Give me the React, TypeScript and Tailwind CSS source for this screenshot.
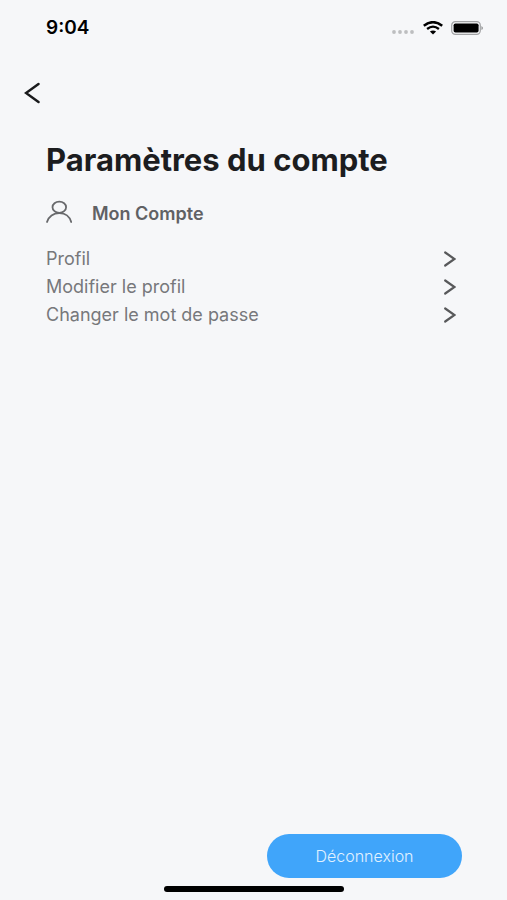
const accountLinks = ["Profil", "Modifier le profil", "Changer le mot de passe"];

function StatusBar() {
  return (
    <div className="flex h-14 items-center justify-between pr-6 pl-[46px]">
      <span className="text-[19px] font-semibold text-black">9:04</span>
      <div className="flex items-center gap-2">
        <svg className="mt-2 h-1 w-6" viewBox="0 0 24 4" fill="#bdbec0" aria-hidden="true">
          <circle cx="3" cy="2" r="1.9" />
          <circle cx="9" cy="2" r="1.9" />
          <circle cx="15" cy="2" r="1.9" />
          <circle cx="21" cy="2" r="1.9" />
        </svg>
        <svg className="h-[14px] w-5" viewBox="0 0 20 14" fill="none" aria-hidden="true">
          <path d="M0.8 4.7Q10 -2.4 19.2 4.7" stroke="#000" strokeWidth="2.5" />
          <path d="M4.1 8Q10 3.2 15.9 8" stroke="#000" strokeWidth="2.3" />
          <path d="M6.9 10.6Q10 8.3 13.1 10.6L10 13.5Z" fill="#000" />
        </svg>
        <svg className="h-[14px] w-8" viewBox="0 0 32 14" aria-hidden="true">
          <rect x="0.7" y="0.7" width="28.6" height="12.6" rx="3.6" fill="#f6f7f9" stroke="#a2a3a5" strokeWidth="1.2" />
          <rect x="2.6" y="2.4" width="25" height="9.2" rx="1.8" fill="#000" />
          <path d="M30.4 4.9Q32 5.6 32 7T30.4 9.1Z" fill="#98999b" />
        </svg>
      </div>
    </div>
  );
}

function ChevronRight() {
  return (
    <svg className="h-4 w-3" viewBox="0 0 12 16" fill="none" stroke="#58595b" strokeWidth="2.2" aria-hidden="true">
      <path d="M1.2 1.5L10.5 8L1.2 14.5" strokeLinecap="round" />
    </svg>
  );
}

export default function App() {
  return (
    <div className="flex min-h-screen flex-col bg-[#f6f7f9] font-['Inter','Liberation_Sans',sans-serif]">
      <StatusBar />

      <header className="px-6 pt-[26px]">
        <button type="button" aria-label="Retour" className="block">
          <svg className="h-[22px] w-4" viewBox="0 0 16 22" fill="none" stroke="#191a1c" strokeWidth="2.5" aria-hidden="true">
            <path d="M14.500 2L2 11L14.500 20" strokeLinecap="round" />
          </svg>
        </button>
      </header>

      <main className="flex flex-1 flex-col pt-9 pr-[45px] pl-[46px]">
        <h1 className="text-[31px] leading-10 font-bold whitespace-nowrap text-[#1c1d1f]">Paramètres du compte</h1>

        <div className="mt-5 flex h-6 items-end gap-5">
          <svg className="h-6 w-[26px]" viewBox="0 0 26 24" fill="none" stroke="#68696c" strokeWidth="1.8" aria-hidden="true">
            <ellipse cx="13.3" cy="7.2" rx="6.8" ry="5.6" />
            <path d="M1 22C2.500 16.500 7.500 13 13.300 13S23.800 16.500 25.200 22" strokeLinecap="round" />
          </svg>
          <h2 className="text-lg leading-5 font-semibold text-[#606164]">Mon Compte</h2>
        </div>

        <nav className="mt-[21px] pr-[6px]">
          <ul>
            {accountLinks.map((label) => (
              <li key={label}>
                <a href="#" className="flex h-7 items-center justify-between text-lg text-[#77787b]">
                  {label}
                  <ChevronRight />
                </a>
              </li>
            ))}
          </ul>
        </nav>

        <button
          type="button"
          className="mt-auto h-11 w-[195px] self-end rounded-full bg-[#40a5fa] text-base font-light text-[#e0f1ff]"
        >
          Déconnexion
        </button>
      </main>

      <div className="mx-auto mt-2 mb-2 h-[6px] w-[180px] rounded-full bg-black" />
    </div>
  );
}
